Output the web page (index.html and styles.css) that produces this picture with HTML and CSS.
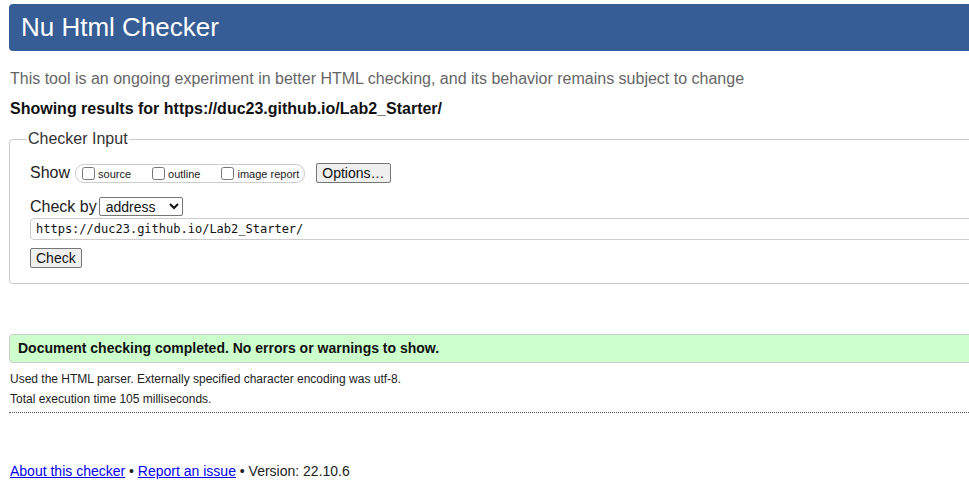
FILE: index.html
```html
<!DOCTYPE html>
<html lang="en">
<head>
<meta charset="utf-8">
<title>Nu Html Checker</title>
<link rel="stylesheet" href="styles.css">
</head>
<body>
<div class="page">
  <header class="banner"><h1 class="title">Nu Html Checker</h1></header>
  <p class="intro">This tool is an ongoing experiment in better HTML checking, and its behavior remains subject to change</p>
  <p class="showing">Showing results for https://duc23.github.io/Lab2_Starter/</p>

  <fieldset class="checker">
    <legend class="legend">Checker Input</legend>
    <div class="row row-show">
      <span class="row-label">Show</span>
      <span class="opts">
        <label class="opt"><input type="checkbox" class="cb"><span class="opt-text">source</span></label>
        <label class="opt"><input type="checkbox" class="cb"><span class="opt-text">outline</span></label>
        <label class="opt last"><input type="checkbox" class="cb"><span class="opt-text">image report</span></label>
      </span>
      <button class="btn options" type="button">Options…</button>
    </div>
    <div class="row row-by">
      <span class="row-label">Check by</span>
      <select class="sel"><option>address</option></select>
    </div>
    <div class="row row-url">
      <input class="url" type="text" value="https://duc23.github.io/Lab2_Starter/">
    </div>
    <div class="row row-check">
      <button class="btn check" type="button">Check</button>
    </div>
  </fieldset>

  <div class="success">Document checking completed. No errors or warnings to show.</div>
  <div class="details">
    <p class="detail">Used the HTML parser. Externally specified character encoding was utf-8.</p>
    <p class="detail">Total execution time 105 milliseconds.</p>
  </div>

  <footer class="footer">
    <a href="#" class="link">About this checker</a> • <a href="#" class="link">Report an issue</a> • Version: 22.10.6
  </footer>
</div>
</body>
</html>
```

FILE: styles.css
```css
html, body {
  margin: 0;
  padding: 0;
  overflow: hidden;
  background: #fff;
}

body {
  font-family: "Liberation Sans", Arial, sans-serif;
  color: #222;
}

.page {
  width: 1200px;
  padding: 4px 0 0 9px;
}

.banner {
  height: 47px;
  background: #365d95;
  border-radius: 4px;
}

.title {
  margin: 0;
  padding-left: 12px;
  font-size: 26px;
  font-weight: normal;
  line-height: 46px;
  color: #fff;
}

.intro {
  margin: 19px 0 0 1px;
  font-size: 16px;
  line-height: 18px;
  color: #666;
}

.showing {
  margin: 12px 0 0 1px;
  font-size: 16px;
  line-height: 18px;
  font-weight: bold;
  color: #111;
}

.checker {
  margin: 12px 0 0 0;
  padding: 0 20px 15px 20px;
  border: 1px solid #ccc;
  border-radius: 4px;
}

.legend {
  padding: 0 1px;
  margin-left: -3px;
  font-size: 16px;
  line-height: 18px;
  color: #333;
}

.row {
  display: flex;
  align-items: center;
}

.row-label {
  font-size: 16px;
  line-height: 18px;
  color: #222;
}

.row-show {
  margin-top: 15px;
  height: 20px;
}

.opts {
  display: inline-flex;
  align-items: center;
  margin-left: 5px;
  height: 17px;
  padding: 0 5px 0 2px;
  border: 1px solid #ccc;
  border-radius: 9px;
}

.opt {
  display: inline-flex;
  align-items: center;
  margin-right: 17px;
}

.opt.last {
  margin-right: 0;
}

.cb {
  width: 13px;
  height: 13px;
  margin: 0 3px 0 4px;
}

.opt-text {
  font-size: 11px;
  line-height: 13px;
  color: #222;
  position: relative;
  top: 1px;
}

.btn {
  font-family: "Liberation Sans", Arial, sans-serif;
  font-size: 14px;
  line-height: 16px;
  color: #111;
  background: #efefef;
  border: 1px solid #767676;
  border-radius: 2px;
  padding: 1px 5px;
  height: 20px;
}

.options {
  margin-left: 11px;
}

.row-by {
  margin-top: 14px;
  height: 19px;
}

.sel {
  margin-left: 2px;
  width: 84px;
  height: 19px;
  font-family: "Liberation Sans", Arial, sans-serif;
  font-size: 14px;
  color: #111;
  border: 1px solid #767676;
  border-radius: 2px;
  background: #fff;
  padding: 0 0 0 2px;
}

.row-url {
  margin-top: 2px;
}

.url {
  width: 1160px;
  height: 22px;
  box-sizing: border-box;
  padding: 0 5px;
  border: 1px solid #ccc;
  border-radius: 4px;
  font-family: "DejaVu Sans Mono", "Liberation Mono", monospace;
  font-size: 12px;
  color: #111;
  background: #fff;
}

.row-check {
  margin-top: 8px;
}

.success {
  margin-top: 50px;
  height: 27px;
  box-sizing: content-box;
  padding: 0 8px;
  border: 1px solid #ccc;
  border-radius: 4px;
  background: #ccffcc;
  font-size: 14px;
  line-height: 27px;
  font-weight: bold;
  color: #111;
}

.details {
  margin-top: 9px;
  padding-bottom: 6px;
  border-bottom: 1px dotted #555;
}

.detail {
  margin: 0 0 6px 1px;
  font-size: 12px;
  line-height: 14px;
  color: #222;
}

.detail:last-child {
  margin-bottom: 0;
}

.footer {
  margin-top: 50px;
  margin-left: 1px;
  font-size: 14px;
  line-height: 16px;
  color: #222;
}

.link {
  color: #0000ee;
  text-decoration: underline;
}
```
